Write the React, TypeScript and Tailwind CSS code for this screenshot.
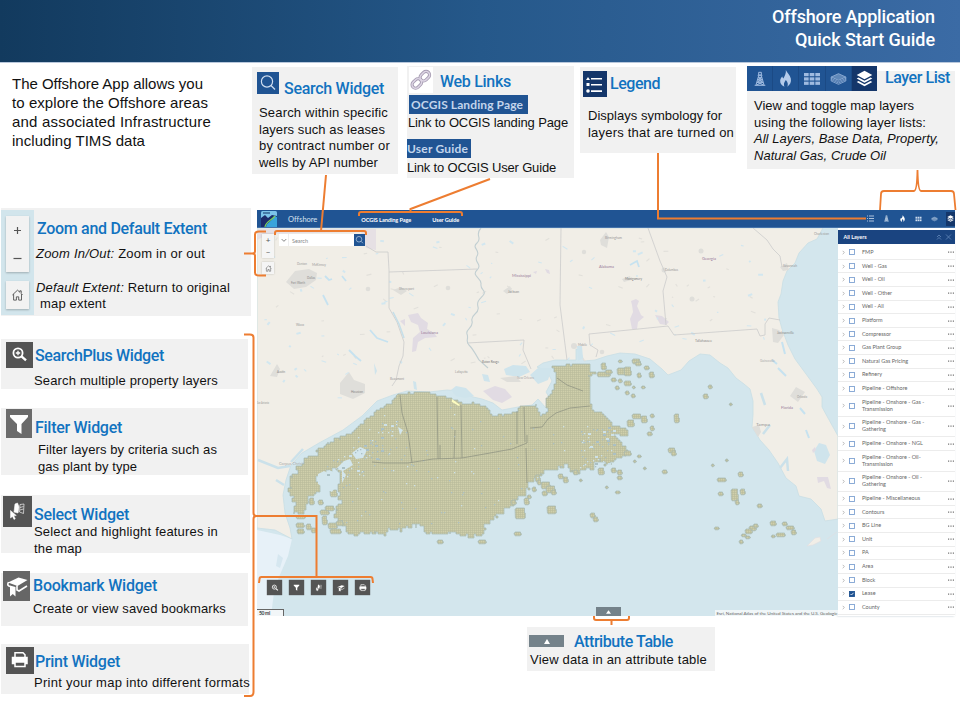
import React, { useLayoutEffect, useRef } from "react";

/* Text run whose tracking is adjusted so that it spans the given width. */
function Fit({ w, className = "", children }: { w: number; className?: string; children: React.ReactNode }) {
  const ref = useRef<HTMLSpanElement>(null);
  useLayoutEffect(() => {
    const el = ref.current;
    if (!el) return;
    el.style.letterSpacing = "0px";
    const n = (el.textContent || "").length;
    el.style.letterSpacing = `${(w - el.getBoundingClientRect().width) / n}px`;
  }, [w]);
  return (
    <div className={`whitespace-pre ${className}`}>
      <span ref={ref}>{children}</span>
    </div>
  );
}

const body = "pt-px -mb-px font-['Liberation_Sans',sans-serif] text-[13px] leading-[16.6px] text-[#111]";
const head = "font-[Roboto,sans-serif] text-[16px] leading-[21px] -mb-px font-medium text-[#1273c0]";

type IconProps = { className?: string };

const SearchIcon = ({ className }: IconProps) => (
  <svg viewBox="0 0 22 22" className={className} fill="none" stroke="currentColor" strokeWidth="1.2">
    <circle cx="10" cy="9.5" r="5.6" />
    <path d="M14 13.5l4 4" />
  </svg>
);
const RigIcon = ({ className }: IconProps) => (
  <svg viewBox="0 0 24 24" className={className} fill="none" stroke="currentColor" strokeWidth="1.5">
    <path d="M10 2h4v4h-4zM8.500 6.500h7M10 7L6 21M14 7l4 14M9.500 9.500h5M8.500 13h7M7.500 17h9M9.500 9.500l6 3.500M14.500 9.500l-6 3.500M8.500 13l8 4M15.500 13l-8 4M7.500 17l10 4M16.500 17l-10 4M4 21.500h16" />
  </svg>
);
const FlameIcon = ({ className }: IconProps) => (
  <svg viewBox="0 0 24 24" className={className} fill="currentColor">
    <path fillRule="evenodd" d="M12.500 0c1 3 6 7 7 12 1 5-1 9-5 11.500 1.500-3 1-6-2-9.500-2.500 3-3.500 6.500-2 9.500C6 22 4 18.500 4.500 14.500c.3-2.500 1.500-4 3-5.500.3 1.500.8 2.500 1.500 3 2-4 4-7 3.500-12z" />
  </svg>
);
const GridIcon = ({ className }: IconProps) => (
  <svg viewBox="0 0 24 24" className={className} fill="currentColor">
    {[3, 9.5, 16].map((y) => [0, 8.5, 17].map((x) => <rect key={`${x}-${y}`} x={x} y={y} width="7" height="4.800" />))}
  </svg>
);
const SlabIcon = ({ className }: IconProps) => (
  <svg viewBox="0 0 24 24" className={className} fill="none" stroke="currentColor" strokeWidth="1.1">
    <path d="M1 9l11-5 11 5-11 5z" fill="currentColor" fillOpacity=".5" />
    <path d="M1 9v6l11 5 11-5V9M1 11l11 5 11-5M1 13l11 5 11-5" />
  </svg>
);
const LayersIcon = ({ className }: IconProps) => (
  <svg viewBox="0 0 24 24" className={className} fill="currentColor">
    <path d="M12 1L1 7l11 6 11-6z" />
    <path d="M1 12l2.500-1.500L12 15l8.500-4.500L23 12l-11 6z" />
    <path d="M1 17l2.500-1.500L12 20l8.500-4.500L23 17l-11 6z" />
  </svg>
);
const LegendIcon = ({ className }: IconProps) => (
  <svg viewBox="0 0 24 26" className={className} fill="currentColor">
    <path d="M5 6l2 3H3zM3.500 12h3v3h-3z" />
    <circle cx="5" cy="20" r="1.800" />
    <path d="M8 7h11v1.600H8zM8 13h11v1.600H8zM8 19.300h11v1.600H8z" />
  </svg>
);
const ZoomPlusIcon = ({ className }: IconProps) => (
  <svg viewBox="0 0 27 26" className={className} fill="none" stroke="currentColor" strokeWidth="1.800">
    <circle cx="12" cy="11" r="4.600" />
    <path d="M12 8.800v4.400M9.800 11h4.400" strokeWidth="1.300" />
    <path d="M15.500 14.300l4.500 4" strokeWidth="2.400" />
  </svg>
);
const FilterIcon = ({ className }: IconProps) => (
  <svg viewBox="0 0 26 29" className={className} fill="currentColor">
    <path d="M4 6h18v2l-6.500 7v10L11 22v-7L4 8z" />
  </svg>
);
const SelectIcon = ({ className }: IconProps) => (
  <svg viewBox="0 0 29 31" className={className} fill="none" stroke="currentColor">
    <path d="M11 16l1-8 2.500-1 1.500 4-1 6z" fill="currentColor" strokeWidth=".6" />
    <path d="M17 8.500l4-.5-.5 9.500-4-1.500zM17 11.500l3.500-1M17 14l3.500-1" strokeWidth=".9" opacity=".7" />
    <path d="M7.500 14.500v7.500l2-1.500 1.500 3 1.300-.7-1.500-3 2.500-.3z" fill="currentColor" strokeWidth=".5" />
  </svg>
);
const BookmarkIcon = ({ className }: IconProps) => (
  <svg viewBox="0 0 27 30" className={className} fill="currentColor">
    <path d="M5 11.500L15.500 6.500 24.500 9l-10 6z" />
    <path d="M5.500 11c-1.500 3-.5 4 1.500 4.500M14 14.500v4.500l2 1 8-5" fill="none" stroke="currentColor" strokeWidth="1.600" />
    <path d="M7 14.500l5.500 1.500v9.500l-2.700-2.500L7 25.500z" />
  </svg>
);
const PrintIcon = ({ className }: IconProps) => (
  <svg viewBox="0 0 28 27" className={className} fill="none" stroke="currentColor" strokeWidth="1.500">
    <path d="M9 10V5.800h8l2 2V10" />
    <path d="M6.500 10.500h14.500v6H6.500z" fill="currentColor" />
    <path d="M9 15h10v4.500H9z" fill="#545454" />
  </svg>
);
const HomeIcon = ({ className }: IconProps) => (
  <svg viewBox="0 0 14 14" className={className} fill="none" stroke="currentColor" strokeWidth="1">
    <path d="M1.500 7L7 1.800 9.500 4V2.500h1.500v3L12.500 7M2.800 6v6.500h3V9h2.500v3.500h3V6" />
  </svg>
);
const LinkIcon = ({ className }: IconProps) => (
  <svg viewBox="0 0 24 24" className={className} fill="none">
    <g stroke="#a69cb2" strokeWidth="3.200">
      <rect x="10.500" y="4.500" width="10.500" height="7" rx="3.500" transform="rotate(-45 16 8)" />
      <rect x="3" y="12" width="10.500" height="7" rx="3.500" transform="rotate(-45 8 16)" />
    </g>
    <g stroke="#ddd5e4" strokeWidth="1.500">
      <rect x="10.500" y="4.500" width="10.500" height="7" rx="3.500" transform="rotate(-45 16 8)" />
      <rect x="3" y="12" width="10.500" height="7" rx="3.500" transform="rotate(-45 8 16)" />
    </g>
  </svg>
);

/* ---------- map ---------- */

function rng(seed: number) {
  let s = seed;
  return () => {
    s = (s * 1664525 + 1013904223) % 4294967296;
    return s / 4294967296;
  };
}

const leasePts: [number, number][] = [
  [399, 393], [425, 392], [440, 396], [455, 400], [462, 404], [475, 403], [488, 410], [492, 416], [505, 414], [516, 412],
  [518, 407], [536, 405], [539, 415], [548, 410], [546, 398], [553, 387], [557, 373], [552, 366], [588, 364], [590, 371],
  [596, 373], [589, 377], [590, 395], [592, 410], [604, 416], [612, 425], [629, 430], [628, 436], [614, 435], [621, 443],
  [629, 450], [620, 460], [607, 465], [600, 460], [592, 470], [575, 473], [566, 466], [548, 471], [535, 479], [528, 490],
  [515, 503], [500, 514], [485, 528], [483, 536], [470, 537], [455, 534], [430, 533], [425, 527], [415, 526], [400, 531],
  [390, 528], [385, 533], [347, 533], [343, 521], [335, 515], [342, 500], [337, 487], [341, 477], [335, 469], [326, 475],
  [318, 480], [320, 490], [310, 500], [302, 515], [296, 512], [294, 500], [290, 490], [291, 478], [298, 466], [310, 456],
  [330, 442], [350, 434], [363, 422], [378, 409], [390, 403],
];

/* Steps along the outline on the 2-unit block grid, so that the edge is ragged. */
function roughPath(pts: [number, number][], step: number, jitter: number, seed: number) {
  const r = rng(seed);
  const snap = (v: number) => Math.round(v / 2) * 2;
  let d = "";
  pts.forEach((p, i) => {
    const q = pts[(i + 1) % pts.length];
    const n = Math.max(1, Math.round(Math.hypot(q[0] - p[0], q[1] - p[1]) / step));
    for (let k = 0; k < n; k++) {
      const j = p[1] > 440 ? jitter : jitter * 0.25;
      const x = snap(p[0] + ((q[0] - p[0]) * k) / n + (r() - 0.5) * j);
      const y = snap(p[1] + ((q[1] - p[1]) * k) / n + (r() - 0.5) * j);
      d += d ? `H${x}V${y}` : `M${x} ${y}`;
    }
  });
  return d + "Z";
}

const leasePath = roughPath(leasePts, 3, 4.5, 7);

const isles: number[][] = [
  [601, 363, 4, 6], [597, 372, 12, 4], [605, 370, 6, 3], [618, 360, 3, 2], [617, 368, 10, 6], [624, 367, 6, 8], [632, 359, 7, 4],
  [635, 362, 5, 3], [644, 366, 4, 3], [649, 372, 4, 5], [637, 373, 3, 4], [611, 378, 4, 3], [618, 379, 3, 3], [624, 381, 6, 4],
  [615, 386, 3, 3], [625, 391, 3, 3], [631, 394, 3, 3], [641, 386, 3, 2], [632, 386, 2, 2], [703, 394, 4, 4], [708, 385, 3, 3],
  [627, 420, 6, 6], [632, 414, 8, 4], [641, 416, 5, 6], [650, 414, 3, 3], [647, 432, 4, 3], [650, 426, 3, 4], [674, 414, 4, 8],
  [668, 448, 6, 4], [671, 451, 4, 4], [662, 470, 4, 3], [637, 455, 3, 2], [633, 460, 2, 2], [643, 467, 2, 2], [624, 451, 6, 4],
  [598, 468, 5, 6], [611, 468, 4, 4], [617, 470, 4, 4], [617, 476, 4, 3], [605, 486, 2, 2], [615, 491, 4, 2], [547, 506, 8, 7],
  [541, 482, 8, 6], [546, 486, 8, 6], [551, 490, 4, 4], [535, 475, 4, 6], [558, 474, 4, 4], [563, 477, 4, 5], [573, 470, 4, 4],
  [579, 479, 2, 2], [590, 513, 4, 4], [593, 517, 4, 4], [537, 480, 3, 4], [542, 491, 4, 4], [532, 487, 3, 4], [527, 495, 3, 3],
  [437, 540, 5, 3], [478, 540, 7, 3], [514, 532, 6, 3], [515, 508, 9, 10], [524, 498, 4, 6], [511, 500, 4, 4],
  [717, 478, 8, 3], [718, 492, 4, 3], [738, 472, 4, 4], [731, 489, 6, 11], [735, 500, 3, 4], [740, 489, 4, 5], [757, 504, 4, 3],
  [770, 521, 5, 4], [749, 526, 6, 4], [753, 524, 4, 3], [745, 529, 6, 4], [741, 534, 4, 2], [745, 536, 4, 2], [739, 540, 3, 3],
  [782, 522, 4, 3], [786, 526, 7, 3], [791, 530, 4, 4], [776, 533, 8, 3], [771, 535, 3, 2], [714, 527, 4, 2], [725, 459, 2, 2],
  [711, 464, 2, 2], [729, 403, 2, 2],
  [296, 523, 7, 4], [297, 529, 6, 4], [306, 524, 4, 5], [311, 528, 4, 4], [320, 510, 8, 4], [322, 516, 4, 8], [328, 523, 8, 5],
  [330, 529, 10, 4], [336, 521, 6, 4], [318, 500, 4, 4], [325, 506, 8, 4], [326, 482, 6, 4], [330, 490, 6, 6], [296, 516, 8, 2], [309, 498, 4, 6],
];

function inLease(x: number, y: number) {
  let inside = false;
  leasePts.forEach(([x1, y1], i) => {
    const [x2, y2] = leasePts[(i + 1) % leasePts.length];
    if (y1 > y !== y2 > y && x < ((x2 - x1) * (y - y1)) / (y2 - y1) + x1) inside = !inside;
  });
  return inside;
}

const hr = rng(31);
const holes: number[][] = Array.from({ length: 260 }, (_, i) => {
  const zone = i % 4;
  const x = zone === 0 ? 325 + hr() * 75 : zone === 1 ? 580 + hr() * 34 : 330 + hr() * 235;
  const y = zone === 0 ? 478 - (x - 325) * 0.75 + (hr() - 0.3) * 36 : zone === 1 ? 425 + hr() * 42 : 405 + hr() * 120;
  const big = hr() > 0.75 && zone < 2;
  return [Math.round(x), Math.round(y), big ? 3 : 1.3, big ? 2 : 1.3];
}).filter(([x, y]) => inLease(x, y) && inLease(x - 4, y - 4));

const gr = rng(88);
const specks: number[][] = Array.from({ length: 150 }, () => {
  const x = 262 + gr() * 520;
  const y = 238 + gr() * (x < 370 ? 160 : 130);
  return [x, y, 1 + gr() * 4, -3 + gr() * 6, gr()];
}).filter(([x, y]) => x < 765 && !(x > 640 && y > 340));

const labels: [string, number, number, number, string][] = [
  ["Denton", 297, 265, 10, "#999"], ["McKinney", 312, 265.5, 14, "#999"], ["Fort Worth", 291, 284, 14, "#888"],
  ["Dallas", 307, 278.5, 8, "#888"], ["Waco", 296, 326, 8, "#999"], ["Austin", 277, 373, 8, "#888"], ["Houston", 351, 392.5, 12, "#888"],
  ["Shreveport", 399, 290, 15, "#999"], ["Mississippi", 512, 277, 19, "#9b7d9b"], ["Jackson", 508, 292.5, 11, "#888"],
  ["Louisiana", 421, 334, 17, "#9b7d9b"], ["Baton Rouge", 482, 362.500, 17, "#777"], ["Lafayette", 455, 372.500, 13, "#999"],
  ["New Orleans", 517, 379, 17, "#aaa"], ["Beaumont", 390, 380, 14, "#999"], ["Birmingham", 605, 239, 17, "#999"],
  ["Alabama", 599, 268, 15, "#9b7d9b"], ["Montgomery", 625, 279.500, 17, "#777"], ["Georgia", 702, 260, 14, "#9b7d9b"],
  ["Columbus", 665, 271, 13, "#999"], ["Charleston", 814, 235, 15, "#999"], ["Savannah", 783, 267, 14, "#999"],
  ["Jacksonville", 777, 333.500, 17, "#888"], ["Tallahassee", 695, 342, 17, "#888"], ["Gainesville", 760, 362, 15, "#aaa"],
  ["Mobile", 578, 346, 9, "#999"], ["Orlando", 797, 397.500, 10, "#999"], ["Florida", 781, 408.500, 12, "#9b7d9b"],
  ["Tampa", 756, 426, 14, "#999"], ["San Antonio", 257, 403.500, 12, "#999"], ["Corpus Christi", 279, 464.500, 25, "#aaa"],
];

function GulfMap() {
  return (
    <svg className="block h-[388px] w-[581px]" viewBox="257 228 581 388" fontFamily="Lato, sans-serif">
      <defs>
        <pattern id="cells" width="2" height="2" patternUnits="userSpaceOnUse">
          <rect width="2" height="2" fill="#cfcfab" />
          <path d="M0 0.500H2M0.500 0V2" stroke="#b9ba9a" strokeWidth=".6" />
        </pattern>
      </defs>
      <rect x="257" y="228" width="581" height="388" fill="#d3e6ed" />
      <path d="M257 530L280 535 292 539 288 556 279 577 274 592 271 616H257z" fill="#e7f1f8" />
      <path d="M278 554l5 4-3 10-4-2z" fill="#d6e7f0" />
      <path
        d="M257 228H823L817 239 808 243 799 253 795 263 787 271 783 281 781 294 778 302 779 318 782 329 788 345 795 359 806 374 817 389 822 397 822 407 828 418 838 436V519L825 521 821 509 811 499 799 496 796 486 786 478 778 463 769 450 760 440 752 427 753 415 753 401 750 389 744 384 736 378 728 368 720 363 710 355 700 354 689 361 681 370 668 375 662 369 650 359 635 354 620 353 607 356 595 360 584 361 580 350 576 349 576 360 567 360 555 360 543 363 537 367 547 371 552 381 546 392 553 404 546 408 538 399 532 405 518 407 502 410 493 403 482 399 469 396 460 391 447 390 429 392 407 391 393 395 377 401 362 416 343 430 319 443 302 453 291 465 286 480 283 495 285 513 290 528 292 539 275 530 257 528z"
        fill="#f1eee7" stroke="#c9dee4" strokeWidth=".8"
      />
      <path d="M504 369l9-4 13 1 4 6-11 5-13-2zM530 375l8-7 14 0-4 12-10 4zM482 374l6 1 2 7-6-1zM451 390l5-4 10 2 8 8-9 2-9-2z" fill="#cfe4ec" />
      <path d="M577 346l5 0 1 12-5 3zM374 363l3 8-2 4zM413 381l3 1 1 8-3-1zM373 407l-8 10-6 3zM814 451l5-8 7 2 4 10-5 9-8-3z" fill="#cfe4ec" />
      <path d="M258 460l20 8 12-2M291 462l12-13M276 480l8 5M761 393l4 12M780 468l7-9 1 12M770 425l-7 9" stroke="#cbe1ea" strokeWidth="2.500" fill="none" />
      <path d="M782 342l3 12M778 368l8 8M772 360l5 4M800 408l5 6M806 430l3 8" stroke="#c6e2f0" strokeWidth="2" fill="none" />
      <g fill="#e1dbe3">
        <path d="M258 229h118v21l-10-2-5-16-92 2-12 6z" opacity=".75" />
        <path d="M408 315l10-2 3 5 7 5-1 6 7 4 3 4-12 1-7 4-2 9-4 1 1-14 7-6-2-7-7-3z" />
        <path d="M483 391l12-5 10 3 7 8-10 6-9-3z" />
        <path d="M631 301l5-2 3 2-2 5 4 9 3 2-6 5-1 7h-5l-2-10 3-7-1-7z" />
        <path d="M655 315l7 1 7 6-3 3-6-1zM812 450l3-3 1 3-3 3zM817 477h11l3 12-4-1-3-7-6 2z" />
        <path d="M533 272l4-1-1 3zM545 269l4 1 1 4-3-1zM400 321l5-2 0 7z" />
      </g>
      <g fill="#dfdeda">
        <path d="M286 282l9-11 14-2 8 4-1 7-10 7-12 2z" />
        <path d="M340 383l9-11 5 8 11 4 0 9-12 6-13-5z" />
        <path d="M393 290l8-3 6 4-6 4zM503 291l7-5 2 5-5 3zM600 240l6-8 3 5-2 11-6-3zM622 279l8-3 1 4-7 2zM270 376l7-12 3 5-3 8zM772 328l7 2 5 5-6 8-5-1zM790 396l6-9 9 5-7 10zM500 378l16-2 5 6-14 0zM780 267l7-4 2 7-6 1zM752 427l7-2 2 7-3 5z" />
        <circle cx="701" cy="251" r="2.500" /><circle cx="584" cy="252" r="2.200" /><circle cx="692" cy="299" r="2.500" /><circle cx="448" cy="288" r="2.300" />
        <circle cx="664" cy="270" r="2.500" /><circle cx="602" cy="352" r="2.300" /><circle cx="368" cy="289" r="2.300" /><circle cx="574" cy="346" r="3" />
      </g>
      {specks.map(([x, y, dx, dy, t], i) => (
        <path key={i} d={`M${x} ${y}l${dx} ${dy}`} stroke={t > 0.45 ? "#d2e7f0" : "#e2e0db"} strokeWidth={t > 0.8 ? 2 : 1.1} />
      ))}
      <path d="M325 276l4 4 3-1M342 276l4 5M370 330l7 8 11 4M349 350l6 6 6 5M323 295l5 10M630 265l7-4 2 6" stroke="#c6e2f0" strokeWidth="1.800" fill="none" />
      <path d="M366 246l10 6h12l1 18v38l8 14 7 20-1 14-4 10-3 14-4 6M389 272l88-3M467 343l57-3-1 10 8 19M561 228l-1 77 7 55M648 228l12 33 7 16-4 14 3 34M590 345l-1-11 79-8M590 345l8 5-2 7M668 326l6 9 83-6 3 7 5-1 0-11 4-6 11 2M753 228l14 12 6 9 7 7 2 11" stroke="#cbcccb" strokeWidth=".8" fill="none" />
      <path d="M481 228c-7 7 2 10-4 15s4 7 0 13 6 8 0 14 5 8 4 14 5 6 3 10-8 6-6 13-8 7-6 14-7 8-5 13-2 7 2 11 6 8 10 15l9 8" stroke="#c2cfd2" strokeWidth="1.100" fill="none" />
      <path d="M393 312l6 12 5 14" stroke="#c6dfe9" strokeWidth="1.600" fill="none" />
      {labels.map(([t, x, y, w, c]) => (
        <text key={t} x={x} y={y} fontSize="4.200" textLength={w} lengthAdjust="spacingAndGlyphs" fill={c}>{t}</text>
      ))}
      <path d={leasePath} fill="url(#cells)" stroke="#a8b8b0" strokeWidth=".7" />
      {isles.map(([x, y, w, h], i) => (
        <path
          key={i}
          d={`M${x} ${y + 1}h1v-1h${w - 0.5}v${h / 2}h.8v${h / 2}h-1v.8h-${w - 0.7}v-1h-.6z`}
          fill="url(#cells)" stroke="#a8b8b0" strokeWidth=".7"
        />
      ))}
      <path d="M344 461l6-2 3 6-10 6-7-2zM352 453l8-6 7 3-4 8-7 1zM398 427l5 3-3 5zM318 474l6-3 4 2-1 8-4 6-5-3zM329 470l7 3 2 10-6 9-6-3-2-10zM321 478l8 2-2 9-5-3zM342 470l4 5-4 8z" fill="#d3e6ed" />
      {holes.map(([x, y, w, h], i) => (
        <rect key={i} x={x} y={y} width={w} height={h} fill={i % 3 ? "#abc0c4" : "#cde1e8"} />
      ))}
      <path d="M400 395l2 18 6 20 4 30M437 397l1 62M461 405l1 53M455 430l-1 28M440 445v14M517 411l0 33M524 407l1 35M372 462l12 1 24 0 25-4 29-1 28-5 22-4 15-6 0-8M526 448l1 35M530 428l12-1 6-8 8-6 14-5 20-2M557 378l10 7 16 6" stroke="#8b8f80" strokeWidth=".7" fill="none" />
      <path d="M452 399l8 6-1 1-7-4z" fill="#fdfcc0" />
      <path d="M807 546l8-8 5-1 1 4-8 4zM827 539l10-7" fill="#f1eee7" stroke="#e0dde1" strokeWidth=".6" />
    </svg>
  );
}

const layerNames: string[][] = [
  ["FMP"], ["Well - Gas"], ["Well - Oil"], ["Well - Other"], ["Well - All"], ["Platform"], ["Compressor"], ["Gas Plant Group"],
  ["Natural Gas Pricing"], ["Refinery"], ["Pipeline - Offshore"], ["Pipeline - Onshore - Gas -", "Transmission"],
  ["Pipeline - Onshore - Gas -", "Gathering"], ["Pipeline - Onshore - NGL"], ["Pipeline - Onshore - Oil-", "Transmission"],
  ["Pipeline - Onshore - Oil -", "Gathering"], ["Pipeline - Miscellaneous"], ["Contours"], ["BG Line"], ["Unit"], ["PA"],
  ["Area"], ["Block"], ["Lease"], ["County"],
];

function LayerPanel() {
  return (
    <aside className="h-[388px] w-[117px] overflow-hidden bg-white pt-[2.400px] shadow-[-1px_0_2px_rgba(90,120,140,.4)]">
      <div className="mb-[2.200px] flex h-[13.600px] items-center bg-[#1a4480] pl-[5.500px] pr-[3px] text-white">
        <Fit w={23} className="text-[5.400px] leading-[8px] font-bold">All Layers</Fit>
        <svg viewBox="0 0 16 8" className="ml-auto h-[8px] w-[16px]" fill="none" stroke="#6489ba" strokeWidth=".8">
          <path d="M1 4l2-2 2 2M1 6.500l2-2 2 2M10 1.500l5 5M15 1.500l-5 5" />
        </svg>
      </div>
      {layerNames.map((lines, i) => (
        <div key={i} className={`flex items-center border-b border-[#ececec] pl-[4px] pr-[1px] ${lines.length > 1 ? "h-[20.700px]" : "h-[13.620px]"}`}>
          <svg viewBox="0 0 3 6" className="h-[5px] w-[3px]" fill="none" stroke="#999" strokeWidth=".8"><path d="M.5 1l2 2-2 2" /></svg>
          <svg viewBox="0 0 6 6" className="ml-[4px] h-[6px] w-[6px]">
            <rect x=".5" y=".5" width="5" height="5" fill={lines[0] === "Lease" ? "#1f5291" : "#fff"} stroke={lines[0] === "Lease" ? "#1f5291" : "#7fa3d2"} strokeWidth=".9" />
            {lines[0] === "Lease" && <path d="M1.500 3l1 1 2-2.200" fill="none" stroke="#fff" strokeWidth=".8" />}
          </svg>
          <div className="ml-[7px] text-[5.500px] leading-[7px] whitespace-pre text-[#666]">
            {lines.map((l) => <div key={l}>{l}</div>)}
          </div>
          <svg viewBox="0 0 6 2" className="ml-auto h-[2px] w-[6px] shrink-0" fill="#777"><path d="M0 .5h1.200v1.200h-1.200zM2.400 .5h1.200v1.200h-1.200zM4.800 .5h1.200v1.200h-1.200z" /></svg>
        </div>
      ))}
    </aside>
  );
}

const MapButton = ({ children }: { children: React.ReactNode }) => (
  <div className="flex h-[15px] w-[15px] items-center justify-center bg-[#545454] text-white shadow-[0_0_1px_#444]">{children}</div>
);

function AppShot() {
  return (
    <div className="ml-[5px] h-[406px] w-[698px] font-[Lato,sans-serif]">
      <div className="flex h-[18px] items-center border-b border-[#4573ab] bg-[#205493] text-white">
        <svg viewBox="0 0 16 16" className="ml-[4px] h-[16px] w-[16px]">
          <rect width="16" height="16" rx="1.500" fill="#7cc3ea" />
          <path d="M0 7l4-3 3 3 4-3 5 1v11H0z" fill="#1c2b6b" />
          <path d="M5 16c1-5 5-5 9-11l2 1v10z" fill="#39a4dc" />
          <path d="M4 16c1-6 6-6 10-11" stroke="#78cc62" strokeWidth="1.300" fill="none" />
          <path d="M2 2h7" stroke="#234a7c" strokeWidth="1.200" />
        </svg>
        <Fit w={29} className="ml-[11px] pt-[2px] text-[7.500px] leading-[12px] text-[#d6e2f0]">Offshore</Fit>
        <Fit w={50} className="ml-[44px] pt-[2px] text-[5.600px] leading-[10px] font-bold">OCGIS Landing Page</Fit>
        <Fit w={27} className="ml-[21px] pt-[2px] text-[5.600px] leading-[10px] font-bold">User Guide</Fit>
        <div className="ml-auto flex h-[18px] items-center text-[#d3e0f0]">
          <svg viewBox="0 0 7 7" className="mr-[9px] h-[7px] w-[7px]" stroke="currentColor" strokeWidth=".8"><path d="M0 1h1M2 1h5M0 3.500h1M2 3.500h5M0 6h1M2 6h5" /></svg>
          <RigIcon className="mr-[9px] h-[7px] w-[7px]" />
          <FlameIcon className="mr-[9px] h-[7px] w-[7px] text-white" />
          <GridIcon className="mr-[9px] h-[6px] w-[7px]" />
          <SlabIcon className="mr-[8px] h-[6px] w-[7px]" />
          <div className="flex h-[14px] w-[9px] items-center justify-center bg-[#14366a]"><LayersIcon className="h-[7px] w-[7px] text-white" /></div>
        </div>
      </div>
      <div className="flex">
        <div className="relative h-[388px] w-[581px]">
          <GulfMap />
          <div className="absolute left-[5px] top-[6px] flex flex-col gap-[4px] text-[#555]">
            <div className="flex h-[24px] w-[12px] flex-col items-center justify-around bg-[#f5f5f5] text-[8px] leading-[8px] shadow-[0_0_2px_rgba(0,0,0,.2)]"><span>+</span><span>−</span></div>
            <div className="flex h-[12px] w-[12px] items-center justify-center bg-[#f5f5f5] shadow-[0_0_2px_rgba(0,0,0,.2)]"><HomeIcon className="h-[7px] w-[7px]" /></div>
          </div>
          <div className="absolute left-[22px] top-[6px] flex h-[12px] w-[86px] items-center bg-white">
            <svg viewBox="0 0 10 12" className="h-[12px] w-[10px] border-r border-[#eee]" fill="none" stroke="#666" strokeWidth=".9"><path d="M3 5l2.500 2.500L8 5" /></svg>
            <Fit w={16} className="ml-[3px] pt-px text-[5.500px] leading-[10px] text-[#888]">Search</Fit>
            <div className="ml-auto h-[12px] w-[11px] bg-[#205493] text-[#d3e0f0]"><SearchIcon className="h-[12px] w-[11px]" /></div>
          </div>
          <div className="absolute left-[10px] top-[352px] flex gap-[7px]">
            <MapButton><ZoomPlusIcon className="h-[12px] w-[12px]" /></MapButton>
            <MapButton><FilterIcon className="h-[9px] w-[9px]" /></MapButton>
            <MapButton><SelectIcon className="h-[12px] w-[12px]" /></MapButton>
            <MapButton><BookmarkIcon className="h-[10px] w-[10px]" /></MapButton>
            <MapButton><PrintIcon className="h-[12px] w-[12px]" /></MapButton>
          </div>
          <div className="absolute bottom-0 left-0 flex h-[7px] w-[27px] items-center border-t border-r border-[#666] bg-[#f2f6f8]">
            <Fit w={11} className="ml-[2px] text-[5px] leading-[6px] font-bold text-[#444]">50 mi</Fit>
          </div>
          <div className="absolute bottom-0 left-[339px] flex h-[9px] w-[25px] items-center justify-center bg-[#74828a]">
            <svg viewBox="0 0 6 4" className="h-[4px] w-[5px]" fill="#fff"><path d="M3 0l3 4H0z" /></svg>
          </div>
          <div className="absolute right-0 bottom-0 flex h-[6px] w-[123px] items-center bg-[#f0f6f8] pl-[1.500px]">
            <Fit w={121} className="text-[4.600px] leading-[6px] text-[#666]">Esri, National Atlas of the United States and the U.S. Geologic</Fit>
          </div>
        </div>
        <LayerPanel />
      </div>
    </div>
  );
}

function Connectors() {
  return (
    <svg className="pointer-events-none absolute top-0 left-0 h-[720px] w-[960px]" viewBox="0 0 960 720" fill="none" stroke="#ed7d31" strokeWidth="2">
      <path d="M326 175L321 231M275 235v-2q0-2 2-2h87q2 0 2 2v2" />
      <path d="M490 179L410.500 209v3M359 216v-2q0-2 2-2h99q2 0 2 2v2" />
      <path d="M658 153v65.500H866" />
      <path d="M880 210l1-16q0-3 3-3h30q3 0 3.500-21 .5 21 3.500 21h30q3 0 3 3l1.500 16" strokeWidth="1.800" />
      <path d="M266 231.500h-7q-4 0-4 3v17q0 2-3 2h-8h8q3 0 3 2v17q0 3 4 3h7" />
      <path d="M244 334.500h6q3.500 0 3.500 3V513q0 3 3 3 -3 0-3 3V692q0 4-3.500 4h-6" />
      <path d="M254 516h62.500v61M259 583l.5-4q0-2 2-2h109q2 0 2 2l.5 4" />
      <path d="M594 616v2q0 2 2 2h31q2 0 2-2v-2M611.500 620v5" />
    </svg>
  );
}

const LeftCard = ({ box, icon, children }: { box: string; icon: React.ReactNode; children: React.ReactNode }) => (
  <section className={`ml-[1px] flex items-start bg-[#f1f1f1] ${box}`}>
    {icon}
    <div>{children}</div>
  </section>
);

export default function App() {
  return (
    <main className="relative flex h-[720px] w-[960px] flex-col overflow-hidden bg-white font-['Liberation_Sans',sans-serif]">
      <header className="flex h-[63px] shrink-0 flex-col items-end border-b border-[#b9c8dc] bg-linear-to-r from-[#123a5e] via-[#25588a] to-[#3b6ba5] pt-[5px] pr-[25px] font-[Roboto,sans-serif] text-[18px] leading-[23px] font-medium text-white">
        <Fit w={163}>Offshore Application</Fit>
        <Fit w={140}>Quick Start Guide</Fit>
      </header>
      <div className="flex">
        <div className="h-[657px] w-[252px] shrink-0">
          <div className="h-[145px] pt-[11px] pl-[12px] text-[15px] leading-[19.100px] text-[#111]">
            <Fit w={191}>The Offshore App allows you</Fit>
            <Fit w={196}>to explore the Offshore areas</Fit>
            <Fit w={199}>and associated Infrastructure</Fit>
            <Fit w={133}>including TIMS data</Fit>
          </div>
          <LeftCard
            box="h-[108px] w-[250px]"
            icon={
              <div className="mt-[2px] flex h-[105px] w-[33px] shrink-0 flex-col items-center gap-[9px] bg-[#d2e5ec] pt-[6px] text-[#555]">
                <div className="flex h-[56px] w-[23px] flex-col items-center justify-around bg-[#f2f2f2] shadow-[0_1px_2px_rgba(0,0,0,.25)]">
                  <svg viewBox="0 0 9 9" className="h-[9px] w-[9px]" stroke="currentColor" strokeWidth="1.200"><path d="M1 4.500h7M4.500 1v7" /></svg>
                  <svg viewBox="0 0 9 9" className="h-[9px] w-[9px]" stroke="currentColor" strokeWidth="1.200"><path d="M.5 4.500h8" /></svg>
                </div>
                <div className="flex h-[28px] w-[23px] items-center justify-center bg-[#f2f2f2] shadow-[0_1px_2px_rgba(0,0,0,.25)]"><HomeIcon className="h-[14px] w-[13px]" /></div>
              </div>
            }
          >
            <Fit w={170} className={`mt-[10px] ml-[3px] ${head}`}>Zoom and Default Extent</Fit>
            <Fit w={169} className={`mt-[7px] ml-[2px] ${body}`}><i>Zoom In/Out:</i> Zoom in or out</Fit>
            <Fit w={194} className={`mt-[17px] ml-[2px] ${body}`}><i>Default Extent:</i> Return to original</Fit>
            <Fit w={66} className={`ml-[6px] ${body}`}>map extent</Fit>
          </LeftCard>
          <LeftCard box="mt-[23px] h-[50px] w-[247px]" icon={<div className="mt-[3px] ml-[5px] h-[26px] w-[27px] shrink-0 bg-[#545454] text-white"><ZoomPlusIcon className="h-[26px] w-[27px]" /></div>}>
            <Fit w={129} className={`mt-[6px] ml-[2px] ${head}`}>SearchPlus Widget</Fit>
            <Fit w={184} className={`mt-[7px] ml-[1px] ${body}`}>Search multiple property layers</Fit>
          </LeftCard>
          <LeftCard box="mt-[19px] h-[67px] w-[247px]" icon={<div className="mt-[1px] ml-[5px] h-[29px] w-[26px] shrink-0 bg-[#6b6b6b] text-white"><FilterIcon className="h-[29px] w-[26px]" /></div>}>
            <Fit w={87} className={`mt-[9px] ml-[3px] ${head}`}>Filter Widget</Fit>
            <Fit w={179} className={`mt-[4px] ml-[6px] ${body}`}>Filter layers by criteria such as</Fit>
            <Fit w={99} className={`ml-[6px] ${body}`}>gas plant by type</Fit>
          </LeftCard>
          <LeftCard box="mt-[20px] h-[58px] w-[249px]" icon={<div className="mt-[1px] ml-[2px] h-[31px] w-[29px] shrink-0 bg-[#545454] text-white"><SelectIcon className="h-[31px] w-[29px]" /></div>}>
            <Fit w={95} className={`mt-[9px] ml-[2px] ${head}`}>Select Widget</Fit>
            <Fit w={184} className={`-mt-[2px] ml-[2px] ${body}`}>Select and highlight features in</Fit>
            <Fit w={48} className={`ml-[2px] ${body}`}>the map</Fit>
          </LeftCard>
          <LeftCard box="mt-[20px] h-[53px] w-[247px]" icon={<div className="-mt-[2px] ml-[2px] h-[30px] w-[27px] shrink-0 bg-[#666] text-white"><BookmarkIcon className="h-[30px] w-[27px]" /></div>}>
            <Fit w={124} className={`mt-[2px] ml-[3px] ${head}`}>Bookmark Widget</Fit>
            <Fit w={193} className={`mt-[5px] ml-[3px] ${body}`}>Create or view saved bookmarks</Fit>
          </LeftCard>
          <LeftCard box="mt-[18px] h-[50px] w-[248px]" icon={<div className="mt-[3px] ml-[5px] h-[27px] w-[28px] shrink-0 bg-[#545454] text-white"><PrintIcon className="h-[27px] w-[28px]" /></div>}>
            <Fit w={85} className={`mt-[7px] ml-[1px] ${head}`}>Print Widget</Fit>
            <Fit w={216} className={`mt-[3px] ${body}`}>Print your map into different formats</Fit>
          </LeftCard>
        </div>

        <div className="w-[708px]">
          <div className="flex h-[147px] items-start pt-[3px]">
            <section className="mt-[1px] h-[107px] w-[146px] bg-[#f1f1f1] pt-[5px] pl-[5px]">
              <div className="flex h-[32px] items-start">
                <div className="h-[22px] w-[22px] bg-[#205493] text-[#d0def0]"><SearchIcon className="h-[22px] w-[22px]" /></div>
                <Fit w={100} className={`mt-[6px] ml-[5px] ${head}`}>Search Widget</Fit>
              </div>
              <div className={`pl-[2px] ${body}`}>
                <Fit w={129}>Search within specific</Fit>
                <Fit w={126}>layers such as leases</Fit>
                <Fit w={131}>by contract number or</Fit>
                <Fit w={119}>wells by API number</Fit>
              </div>
            </section>
            <section className="ml-[9px] h-[112px] w-[167px] bg-[#f1f1f1] pt-[1px]">
              <div className="flex h-[28px] items-start pl-[2px]">
                <div className="h-[26px] w-[24px] bg-white"><LinkIcon className="h-[26px] w-[24px]" /></div>
                <Fit w={71} className={`mt-[4px] ml-[7px] ${head}`}>Web Links</Fit>
              </div>
              <div className="ml-[2px] h-[19px] w-[119px] bg-[#205493] pl-[2px] font-[Lato,sans-serif] text-[12px] leading-[20px] font-bold text-[#c3d5ec]"><Fit w={112}>OCGIS Landing Page</Fit></div>
              <Fit w={160} className={`ml-[1px] ${body}`}>Link to OCGIS landing Page</Fit>
              <div className="mt-[8px] h-[19px] w-[64px] bg-[#205493] font-[Lato,sans-serif] text-[12px] leading-[20px] font-bold text-[#c3d5ec]"><Fit w={61}>User Guide</Fit></div>
              <Fit w={149} className={`mt-[1px] ${body}`}>Link to OCGIS User Guide</Fit>
            </section>
            <section className="mt-[1px] ml-[6px] h-[86px] w-[156px] bg-[#f1f1f1] pt-[4px] pl-[3px]">
              <div className="flex h-[36px] items-start">
                <div className="h-[26px] w-[24px] bg-[#14366a] text-white"><LegendIcon className="h-[26px] w-[24px]" /></div>
                <Fit w={50} className={`mt-[2px] ml-[3px] ${head}`}>Legend</Fit>
              </div>
              <div className={`pl-[5px] ${body}`}>
                <Fit w={134}>Displays symbology for</Fit>
                <Fit w={146}>layers that are turned on</Fit>
              </div>
            </section>
            <section className="ml-[11px] h-[103px] w-[208px] bg-linear-to-b from-white from-[5px] to-[#f1f1f1] to-[5px]">
              <div className="flex h-[31px] items-start">
                <div className="flex h-[25px] w-[130px] divide-x divide-[#1b4a85] bg-[#205493] text-[#9fbbe0]">
                  <div className="flex flex-1 items-center justify-center"><RigIcon className="h-[16px] w-[16px]" /></div>
                  <div className="flex flex-1 items-center justify-center"><FlameIcon className="h-[17px] w-[17px] text-[#b4cbea]" /></div>
                  <div className="flex flex-1 items-center justify-center"><GridIcon className="h-[16px] w-[16px]" /></div>
                  <div className="flex flex-1 items-center justify-center"><SlabIcon className="h-[16px] w-[17px]" /></div>
                  <div className="flex flex-1 items-center justify-center bg-[#14366a]"><LayersIcon className="h-[17px] w-[17px] text-white" /></div>
                </div>
                <Fit w={65} className={`mt-[1px] ml-[8px] ${head}`}>Layer List</Fit>
              </div>
              <div className={`pl-[7px] ${body}`}>
                <Fit w={160}>View and toggle map layers</Fit>
                <Fit w={172}>using the following layer lists:</Fit>
                <Fit w={185} className="italic">All Layers, Base Data, Property,</Fit>
                <Fit w={132} className="italic">Natural Gas, Crude Oil</Fit>
              </div>
            </section>
          </div>
          <AppShot />
          <section className="mt-[11px] ml-[275px] h-[44px] w-[188px] bg-[#f1f1f1] pt-[4px] pl-[2px]">
            <div className="flex items-center">
              <div className="flex h-[12px] w-[35px] items-center justify-center bg-[#74828a]"><svg viewBox="0 0 6 5" className="h-[5px] w-[6px]" fill="#fff"><path d="M3 0l3 5H0z" /></svg></div>
              <Fit w={99} className={`ml-[10px] ${head}`}>Attribute Table</Fit>
            </div>
            <Fit w={177} className={`ml-[1px] ${body}`}>View data in an attribute table</Fit>
          </section>
        </div>
      </div>
      <Connectors />
    </main>
  );
}
